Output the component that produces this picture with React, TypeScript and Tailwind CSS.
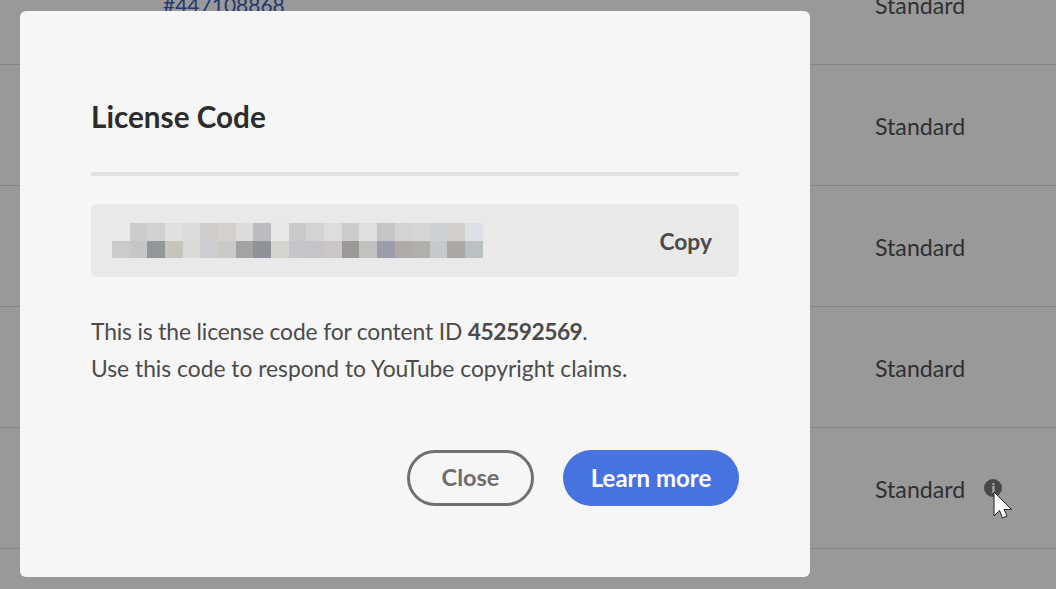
const pixelsTop = [
  "bg-[#e9e9e9]", "bg-[#cdcbcb]", "bg-[#d0d1d3]", "bg-[#dfe0e2]", "bg-[#dcdcdd]", "bg-[#cfcecd]", "bg-[#d5cfcd]",
  "bg-[#dcdcdc]", "bg-[#bbbcc2]", "bg-[#e8e7e6]", "bg-[#c9cacc]", "bg-[#d4d3d1]", "bg-[#dedddc]", "bg-[#cdcccb]",
  "bg-[#e0e0e2]", "bg-[#c5c5c7]", "bg-[#d3d3d3]", "bg-[#d6d6d6]", "bg-[#cdd1d6]", "bg-[#d3cfca]", "bg-[#dce0e6]",
];

const pixelsBottom = [
  "bg-[#cdcbc9]", "bg-[#c5c6c5]", "bg-[#929799]", "bg-[#c5c5bc]", "bg-[#d9d9d7]", "bg-[#ccced1]", "bg-[#cbc9c7]",
  "bg-[#a3a3a3]", "bg-[#8f929b]", "bg-[#d3d4cc]", "bg-[#c4c6ca]", "bg-[#c3c5c8]", "bg-[#cbc7c7]", "bg-[#9a9997]",
  "bg-[#c1c1bd]", "bg-[#9d9caa]", "bg-[#afa9a9]", "bg-[#b1afaa]", "bg-[#c3c9cd]", "bg-[#aba7a2]", "bg-[#b9c1c5]",
];

const rows = ["#447108868", "", "", "", ""];

export default function App() {
  return (
    <div className="relative h-[589px] w-[1056px] overflow-hidden bg-[#999999] font-['Lato','Open_Sans',sans-serif] text-[#303030]">
      <div className="-mt-[56px]">
        {rows.map((id, i) => (
          <div key={i} className="flex h-[121px] items-center border-b border-[#858585] pt-[2px] text-[23.2px]">
            <span className="ml-[163px] w-[712px] text-[21px] text-[#24376f]">{id}</span>
            <span>Standard</span>
            {i === 4 && (
              <span className="-mt-[2px] ml-[19px] flex size-[18px] items-center justify-center rounded-full bg-[#474747] font-['Liberation_Serif',serif] text-[15px] font-bold leading-none text-[#a8a8a8]">
                i
              </span>
            )}
          </div>
        ))}
      </div>

      <svg className="absolute left-[993px] top-[491px]" width="20" height="30" viewBox="0 0 20 30">
        <path d="M1 1V25L6.5 19.5L9.5 27L14 25L11 18.5H18.5Z" fill="#fff" stroke="#222" strokeWidth="1" />
      </svg>

      <div className="absolute left-[20px] top-[11px] h-[566px] w-[790px] rounded-[6px] bg-[#f6f6f6] px-[71px] pt-[88px]">
        <h1 className="text-[29.7px] font-bold leading-[36px] text-[#2c2c2c]">License Code</h1>
        <div className="mt-[37px] h-[4px] bg-[#e1e1e1]" />

        <div className="mt-[28px] flex h-[73px] items-center justify-between rounded-[6px] bg-[#e9e9e9] pl-[21px] pr-[27px]">
          <div className="flex flex-col">
            <div className="flex">
              {pixelsTop.map((c, i) => (
                <div key={i} className={`h-[18px] w-[17.67px] ${c}`} />
              ))}
            </div>
            <div className="flex">
              {pixelsBottom.map((c, i) => (
                <div key={i} className={`h-[17px] w-[17.67px] ${c}`} />
              ))}
            </div>
          </div>
          <span className="pt-[2px] text-[22.8px] font-bold text-[#4b4b4b]">Copy</span>
        </div>

        <p className="mt-[36px] text-[22.8px] leading-[37px] text-[#4b4b4b]">
          <span className="tracking-[-0.13px]">This is the license code for content ID </span>
          <b className="font-bold tracking-[-0.5px]">452592569</b>.
          <br />
          Use this code to respond to YouTube copyright claims.
        </p>

        <div className="mt-[63px] flex justify-end gap-[29px]">
          <button className="h-[56px] w-[127px] rounded-full border-[3px] border-[#707070] text-[23.5px] font-bold text-[#6e6e6e]">
            Close
          </button>
          <button className="h-[56px] w-[176px] rounded-full bg-[#4773e0] text-[24px] font-bold text-white">
            Learn more
          </button>
        </div>
      </div>
    </div>
  );
}
